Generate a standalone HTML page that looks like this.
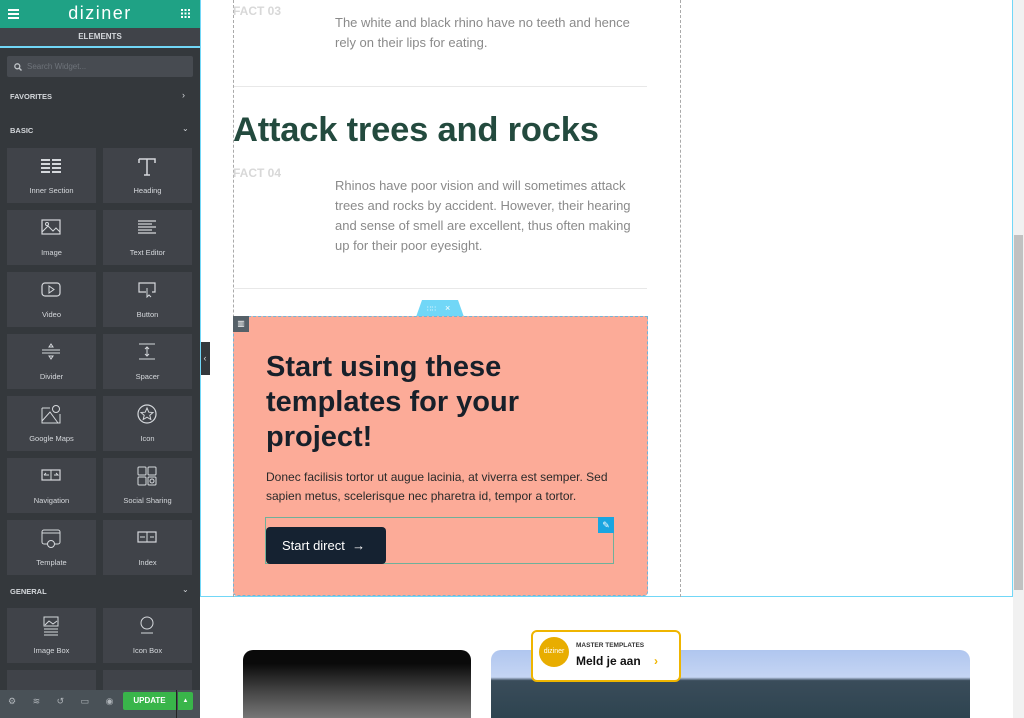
<!DOCTYPE html>
<html style="overflow:hidden;width:1024px;height:718px"><head><meta charset="utf-8"><style>
*{margin:0;padding:0;box-sizing:border-box}
body{width:1024px;height:718px;overflow:hidden;position:relative;background:#fff;font-family:"Liberation Sans",sans-serif}
.sb{position:absolute;left:0;top:0;width:200px;height:718px;background:#34383c;overflow:hidden}
.hd{position:absolute;left:0;top:0;width:200px;height:28px;background:#1fa285;color:#fff}
.tab{position:absolute;top:28px;left:0;width:200px;height:20px;background:#404349;color:#d5d8dc;font-size:8px;font-weight:bold;text-align:center;line-height:18px;border-bottom:2px solid #71d7f7}
.search{position:absolute;left:7px;top:56px;width:186px;height:21px;background:#474b51;border-radius:2px;color:#6e737a;font-size:8px;line-height:21px;padding-left:20px}
.cat{position:absolute;left:10px;color:#d5d8dc;font-size:7.5px;font-weight:bold}
.car{position:absolute;left:182px;color:#d5d8dc;font-size:9px}
.t{position:absolute;width:89px;height:55px;background:#404349;color:#d5d8dc;font-size:7.5px;text-align:center}
.t svg{position:absolute;left:34px;top:8px}
.t span{position:absolute;left:0;right:0;top:38px}
.bb{position:absolute;left:0;top:690px;width:200px;height:28px;background:#495157}
.up{position:absolute;left:123px;top:692px;width:53px;height:18px;background:#39b54a;color:#fff;font-size:8px;font-weight:bold;text-align:center;line-height:18px;border-radius:2px 0 0 2px}
.up2{position:absolute;left:178px;top:692px;width:15px;height:18px;background:#39b54a;color:#fff;font-size:6px;text-align:center;line-height:18px;border-radius:0 2px 2px 0}
.gray{color:#8a8a8a;font-size:13px;line-height:20px;position:absolute;left:335px;width:312px}
.fact{position:absolute;left:233px;color:#d8d8d8;font-weight:bold;font-size:12px}
</style></head><body>
<div class="sb">
<div class="hd">
<div style="position:absolute;left:8px;top:9px;width:11px;height:2px;background:#fff;box-shadow:0 4px #fff,0 8px #fff"></div>
<div style="position:absolute;left:0;width:200px;top:3px;text-align:center;font-size:18px;letter-spacing:1.5px">diziner</div>
<svg style="position:absolute;left:181px;top:9px" width="9" height="9"><g fill="#fff"><rect x="0" y="0" width="2" height="2"/><rect x="3.5" y="0" width="2" height="2"/><rect x="7" y="0" width="2" height="2"/><rect x="0" y="3.5" width="2" height="2"/><rect x="3.5" y="3.5" width="2" height="2"/><rect x="7" y="3.5" width="2" height="2"/><rect x="0" y="7" width="2" height="2"/><rect x="3.5" y="7" width="2" height="2"/><rect x="7" y="7" width="2" height="2"/></g></svg>
</div>
<div class="tab">ELEMENTS</div>
<div class="search"><svg style="position:absolute;left:7px;top:7px" width="8" height="8"><circle cx="3.3" cy="3.3" r="2.5" stroke="#c0c4c8" fill="none" stroke-width="1.3"/><line x1="5" y1="5" x2="7.5" y2="7.5" stroke="#c0c4c8" stroke-width="1.4"/></svg>Search Widget...</div>
<div class="cat" style="top:92px">FAVORITES</div><div class="car" style="top:90px">›</div>
<div class="cat" style="top:126px">BASIC</div><div class="car" style="top:124px;font-size:8px">⌄</div>
<div class="t" style="left:7px;top:148px"><svg width="20" height="18"><g fill="#d5d8dc"><rect x="0" y="3" width="9" height="2"/><rect x="11" y="3" width="9" height="2"/><rect x="0" y="7" width="9" height="2"/><rect x="11" y="7" width="9" height="2"/><rect x="0" y="11" width="9" height="2"/><rect x="11" y="11" width="9" height="2"/><rect x="0" y="15" width="9" height="2"/><rect x="11" y="15" width="9" height="2"/></g></svg><span>Inner Section</span></div>
<div class="t" style="left:103px;top:148px"><svg width="20" height="20"><path d="M2 3H18V7M2 3V7M10 3V19M7 19H13" stroke="#d5d8dc" fill="none" stroke-width="1.5"/></svg><span>Heading</span></div>
<div class="t" style="left:7px;top:210px"><svg width="20" height="18"><rect x="1" y="2" width="18" height="14" stroke="#d5d8dc" fill="none" stroke-width="1.2"/><path d="M1 14L7 8L12 13L15 10L19 14" stroke="#d5d8dc" fill="none"/><circle cx="6" cy="6" r="1.5" stroke="#d5d8dc" fill="none"/></svg><span>Image</span></div>
<div class="t" style="left:103px;top:210px"><svg width="20" height="18"><g stroke="#d5d8dc" stroke-width="1.2"><line x1="1" y1="3" x2="19" y2="3"/><line x1="1" y1="6" x2="15" y2="6"/><line x1="1" y1="9" x2="19" y2="9"/><line x1="1" y1="12" x2="15" y2="12"/><line x1="1" y1="15" x2="19" y2="15"/></g></svg><span>Text Editor</span></div>
<div class="t" style="left:7px;top:272px"><svg width="20" height="18"><rect x="1" y="3" width="18" height="13" rx="3" stroke="#d5d8dc" fill="none" stroke-width="1.2"/><path d="M8 6L13 9.5L8 13Z" stroke="#d5d8dc" fill="none"/></svg><span>Video</span></div>
<div class="t" style="left:103px;top:272px"><svg width="20" height="18"><path d="M9 12H2V3H18V12H15" stroke="#d5d8dc" fill="none" stroke-width="1.2"/><path d="M10 8L10 17L12 15L14 17" stroke="#d5d8dc" fill="none"/></svg><span>Button</span></div>
<div class="t" style="left:7px;top:334px"><svg width="20" height="20"><g stroke="#d5d8dc" fill="none"><line x1="1" y1="8" x2="19" y2="8"/><line x1="1" y1="11" x2="19" y2="11"/><path d="M8 5L10 2L12 5Z"/><path d="M8 14L10 17L12 14Z"/></g></svg><span>Divider</span></div>
<div class="t" style="left:103px;top:334px"><svg width="20" height="20"><g stroke="#d5d8dc" fill="none"><line x1="2" y1="2" x2="18" y2="2"/><line x1="2" y1="17" x2="18" y2="17"/><path d="M10 5V14M8 7L10 5L12 7M8 12L10 14L12 12"/></g></svg><span>Spacer</span></div>
<div class="t" style="left:7px;top:396px"><svg width="20" height="20"><g stroke="#d5d8dc" fill="none"><path d="M1 4H9M1 4V19H19V10"/><path d="M1 17L9 8L17 19"/><circle cx="15" cy="5" r="3.5"/></g></svg><span>Google Maps</span></div>
<div class="t" style="left:103px;top:396px"><svg width="20" height="20"><circle cx="10" cy="10" r="9" stroke="#d5d8dc" fill="none" stroke-width="1.2"/><path d="M10 4L11.8 8.2L16 8.5L12.8 11.3L13.8 15.5L10 13.2L6.2 15.5L7.2 11.3L4 8.5L8.2 8.2Z" stroke="#d5d8dc" fill="none"/></svg><span>Icon</span></div>
<div class="t" style="left:7px;top:458px"><svg width="20" height="18"><rect x="1" y="4" width="18" height="10" stroke="#d5d8dc" fill="none" stroke-width="1.2"/><line x1="10" y1="4" x2="10" y2="14" stroke="#d5d8dc"/><path d="M3 9H8M3 9L5 7M13 9H17L15 7" stroke="#d5d8dc" fill="none"/></svg><span>Navigation</span></div>
<div class="t" style="left:103px;top:458px"><svg width="20" height="20"><g stroke="#d5d8dc" fill="none"><rect x="1" y="1" width="8" height="8" rx="1"/><rect x="11" y="1" width="8" height="8" rx="1"/><rect x="1" y="11" width="8" height="8" rx="1"/><rect x="11" y="11" width="8" height="8" rx="1"/><circle cx="15" cy="15" r="2"/></g></svg><span>Social Sharing</span></div>
<div class="t" style="left:7px;top:520px"><svg width="20" height="20"><g stroke="#d5d8dc" fill="none"><rect x="1" y="2" width="18" height="14" rx="2"/><line x1="1" y1="5" x2="19" y2="5"/><circle cx="10" cy="16" r="3.5" fill="#404349"/></g></svg><span>Template</span></div>
<div class="t" style="left:103px;top:520px"><svg width="20" height="18"><rect x="1" y="4" width="18" height="10" stroke="#d5d8dc" fill="none" stroke-width="1.2"/><line x1="10" y1="4" x2="10" y2="14" stroke="#d5d8dc"/><path d="M3 9H8M13 9H17" stroke="#d5d8dc"/></svg><span>Index</span></div>
<div class="cat" style="top:587px">GENERAL</div><div class="car" style="top:585px;font-size:8px">⌄</div>
<div class="t" style="left:7px;top:608px"><svg width="20" height="20"><g stroke="#d5d8dc" fill="none"><rect x="3" y="1" width="14" height="9"/><path d="M4 9L8 5L12 8L16 5"/><line x1="3" y1="13" x2="17" y2="13"/><line x1="3" y1="16" x2="17" y2="16"/><line x1="3" y1="19" x2="17" y2="19"/></g></svg><span>Image Box</span></div>
<div class="t" style="left:103px;top:608px"><svg width="20" height="20"><g stroke="#d5d8dc" fill="none"><circle cx="10" cy="7" r="6"/><line x1="4" y1="17" x2="16" y2="17"/></g></svg><span>Icon Box</span></div>
<div class="t" style="left:7px;top:670px;height:20px"></div><div class="t" style="left:103px;top:670px;height:20px"></div>
<div class="bb"></div>
<div style="position:absolute;top:696px;left:8px;color:#b0b5ba;font-size:9px;word-spacing:14px">⚙ ≋ ↺ ▭ ◉</div>
<div class="up">UPDATE</div><div class="up2">▲</div>
<div style="position:absolute;left:176px;top:690px;width:1px;height:28px;background:#222"></div>
</div>
<div style="position:absolute;left:200px;top:342px;width:10px;height:33px;background:#34383c;color:#d5d8dc;font-size:9px;line-height:33px;text-align:center">‹</div>

<div style="position:absolute;left:200px;top:0;width:813px;height:597px;border:1px solid #71d7f7;border-top:none"></div>
<div style="position:absolute;left:233px;top:0;width:448px;height:597px;border-left:1px dashed #aaa;border-right:1px dashed #aaa"></div>
<div class="fact" style="top:4px">FACT 03</div>
<div class="gray" style="top:13px">The white and black rhino have no teeth and hence rely on their lips for eating.</div>
<div style="position:absolute;left:234px;top:86px;width:413px;height:1px;background:#e8e8e8"></div>
<div style="position:absolute;left:233px;top:111px;font-size:34.5px;font-weight:bold;color:#234a3e;letter-spacing:-0.2px">Attack trees and rocks</div>
<div class="fact" style="top:166px">FACT 04</div>
<div class="gray" style="top:176px">Rhinos have poor vision and will sometimes attack trees and rocks by accident. However, their hearing and sense of smell are excellent, thus often making up for their poor eyesight.</div>
<div style="position:absolute;left:234px;top:288px;width:413px;height:1px;background:#e8e8e8"></div>
<svg style="position:absolute;left:416px;top:300px" width="48" height="17"><path d="M0 17L6 0H42L48 17Z" fill="#71d7f7"/><text x="11" y="11" font-size="7" fill="#fff" font-family="Liberation Sans">∷∷</text><text x="29" y="11" font-size="9" fill="#fff" font-family="Liberation Sans">×</text></svg>
<div style="position:absolute;left:233px;top:316px;width:415px;height:280px;background:#fcab98;border:1px dashed #71b5d7;border-radius:0 0 4px 4px"></div>
<div style="position:absolute;left:233px;top:316px;width:16px;height:16px;background:#556068;color:#fff;font-size:8px;text-align:center;line-height:16px">▥</div>
<div style="position:absolute;left:266px;top:350px;font-size:29px;font-weight:bold;color:#17202a;line-height:35px;width:340px">Start using these templates for your project!</div>
<div style="position:absolute;left:266px;top:468px;font-size:12px;color:#2a2a2a;line-height:19px;width:350px">Donec facilisis tortor ut augue lacinia, at viverra est semper. Sed sapien metus, scelerisque nec pharetra id, tempor a tortor.</div>
<div style="position:absolute;left:265px;top:517px;width:349px;height:47px;border:1px solid #6fb09a"></div>
<div style="position:absolute;left:598px;top:517px;width:16px;height:16px;background:#1aa5e0;color:#fff;font-size:9px;text-align:center;line-height:16px">✎</div>
<div style="position:absolute;left:266px;top:527px;width:120px;height:37px;background:#152231;border-radius:4px;color:#fff;font-size:13px;line-height:37px;padding-left:16px">Start direct&nbsp;&nbsp;<b>→</b></div>

<div style="position:absolute;left:243px;top:650px;width:228px;height:68px;background:linear-gradient(#0a0a0a 20%,#444 60%,#777);border-radius:10px 10px 0 0"></div>
<div style="position:absolute;left:491px;top:650px;width:479px;height:68px;background:linear-gradient(#b0c6ef 0,#c5d5f3 40%,#3a4c5a 45%,#2e4450);border-radius:10px 10px 0 0"></div>
<div style="position:absolute;left:531px;top:630px;width:150px;height:52px;background:#fff;border:2px solid #efb500;border-radius:6px"></div>
<div style="position:absolute;left:539px;top:637px;width:30px;height:30px;border-radius:50%;background:#e8ad00;color:#fff;font-size:7px;text-align:center;line-height:30px">diziner</div>
<div style="position:absolute;left:576px;top:642px;font-size:6.5px;font-weight:bold;color:#333">MASTER TEMPLATES</div>
<div style="position:absolute;left:576px;top:654px;font-size:12px;font-weight:bold;color:#111">Meld je aan</div>
<div style="position:absolute;left:654px;top:654px;font-size:12px;font-weight:bold;color:#efb500">›</div>
<div style="position:absolute;left:1013px;top:0;width:11px;height:718px;background:#f1f1f1"></div>
<div style="position:absolute;left:1014px;top:235px;width:9px;height:355px;background:#c1c1c1"></div>
</body></html>
